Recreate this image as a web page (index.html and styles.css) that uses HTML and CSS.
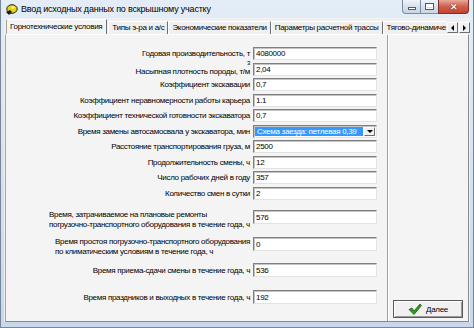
FILE: index.html
```html
<!DOCTYPE html>
<html lang="ru">
<head>
    <meta charset="UTF-8">
    <title>Ввод исходных данных по вскрышному участку</title>
    <link rel="stylesheet" href="styles.css">
</head>
<body>
    <div class="window">
        <!-- Заголовок окна -->
        <div class="titlebar">
            <svg class="app-icon" width="13" height="13" viewBox="0 0 13 13">
                <ellipse cx="7" cy="6" rx="5.2" ry="4.3" fill="#e3d21c" stroke="#2a2a00" stroke-width="1"/>
                <path d="M1 9 L5 7 L7 9 L4 12 Z" fill="#1a1a1a"/>
                <ellipse cx="8" cy="4.5" rx="2" ry="1.3" fill="#f8f070"/>
            </svg>
            <span class="title">Ввод исходных данных по вскрышному участку</span>
            <div class="caption-btns">
                <span class="cbtn cmin"><i></i></span>
                <span class="cbtn cmax"><i></i></span>
                <span class="cbtn cclose">&#x2715;</span>
            </div>
        </div>

        <div class="client">
            <!-- Вкладки -->
            <div class="tabs">
                <div class="tab-list">
                    <div class="tab active">Горнотехнические условия</div>
                    <div class="tab">Типы э-ра и а/с</div>
                    <div class="tab">Экономические показатели</div>
                    <div class="tab">Параметры расчетной трассы</div>
                    <div class="tab">Тягово-динамические показатели</div>
                </div>
                <div class="tab-scroll">
                    <span class="arrow left"></span>
                    <span class="arrow right"></span>
                </div>
            </div>

            <div class="page">
                <div class="form">
                    <div class="rows">
                        <div class="row"><label>Годовая производительность, т</label><input type="text" value="4080000"></div>
                        <div class="row"><label>Насыпная плотность породы, т/м<span class="sup">3</span></label><input type="text" value="2,04"></div>
                        <div class="row"><label>Коэффициент экскавации</label><input type="text" value="0,7"></div>
                        <div class="row"><label>Коэффициент неравномерности работы карьера</label><input type="text" value="1.1"></div>
                        <div class="row"><label>Коэффициент технической готовности экскаватора</label><input type="text" value="0,7"></div>
                        <div class="row">
                            <label>Время замены автосамосвала у экскаватора, мин</label>
                            <div class="combo">
                                <span class="sel">Схема заезда: петлевая 0,39</span>
                                <span class="drop"></span>
                            </div>
                        </div>
                        <div class="row"><label>Расстояние транспортирования груза, м</label><input type="text" value="2500"></div>
                        <div class="row"><label>Продолжительность смены, ч</label><input type="text" value="12"></div>
                        <div class="row"><label>Число рабочих дней в году</label><input type="text" value="357"></div>
                        <div class="row"><label>Количество смен в сутки</label><input type="text" value="2"></div>
                    </div>

                    <div class="row tall first">
                        <label class="multi">Время, затрачиваемое на плановые ремонты<br>погрузочно-транспортного оборудования в течение года, ч</label>
                        <input type="text" class="big" value="576">
                    </div>
                    <div class="row tall second">
                        <label class="multi">Время простоя погрузочно-транспортного оборудования<br>по климатическим условиям в течение года, ч</label>
                        <input type="text" class="big" value="0">
                    </div>
                    <div class="row third"><label>Время приема-сдачи смены в течение года, ч</label><input type="text" class="big" value="536"></div>
                    <div class="row fourth"><label>Время праздников и выходных в течение года, ч</label><input type="text" class="big" value="192"></div>
                </div>

                <div class="side">
                    <button class="next">
                        <svg width="14" height="12" viewBox="0 0 14 12">
                            <path d="M1 6.5 L4 5 L6 8 L12 1 L13.5 2.5 L6 11.5 Z" fill="#2f9e1f" stroke="#1b5e12" stroke-width="0.8"/>
                        </svg>
                        <span>Далее</span>
                    </button>
                </div>
            </div>
        </div>
    </div>
</body>
</html>
```

FILE: styles.css
```css
/* styles.css */
* {
    margin: 0;
    padding: 0;
    box-sizing: border-box;
}

body {
    width: 474px;
    height: 328px;
    overflow: hidden;
    font-family: "Liberation Sans", Arial, sans-serif;
    font-size: 8px;
    letter-spacing: -0.3px;
    color: #000;
    background: #c9d8ea;
}

.window {
    width: 474px;
    height: 328px;
    display: flex;
    flex-direction: column;
    background: linear-gradient(#e4edf7, #d3e0ef 60%, #c8d8ea);
    border: 1px solid #75869b;
    border-top: none;
    padding: 0 3px 5px 3px;
}

/* Заголовок */
.titlebar {
    height: 18px;
    display: flex;
    align-items: center;
    flex: none;
}

.app-icon {
    margin-left: 1px;
    margin-top: 1px;
}

.title {
    margin-left: 3px;
    font-size: 9px;
    letter-spacing: -0.2px;
    color: #000;
}

.caption-btns {
    margin-left: auto;
    align-self: flex-start;
    display: flex;
    margin-right: 1px;
}

.cbtn {
    height: 14px;
    display: flex;
    align-items: center;
    justify-content: center;
    border: 1px solid #7b8ba0;
    border-top: none;
}

.cmin,
.cmax {
    width: 18px;
    background: linear-gradient(#eef3f9, #d6e1ee 50%, #c7d5e6);
    border-right: none;
}

.cmin {
    border-bottom-left-radius: 4px;
}

.cmin i {
    width: 8px;
    height: 3px;
    margin-top: 3px;
    background: #fff;
    border: 1px solid #4f5c6c;
}

.cmax i {
    width: 9px;
    height: 7px;
    border: 1px solid #4f5c6c;
    box-shadow: inset 0 0 0 1px #fff, inset 0 2px 0 1px #fff;
}

.cclose {
    width: 31px;
    background: linear-gradient(#e9a99b, #cf5f4e 50%, #c4432f);
    border-color: #7d3027;
    border-bottom-right-radius: 4px;
    color: #fff;
    font-size: 9px;
    font-weight: bold;
    text-shadow: 0 0 1px #5a1b14, 0 0 1px #5a1b14;
}

/* Клиентская область */
.client {
    flex: 1;
    display: flex;
    flex-direction: column;
    background: #f0f0f0;
}

.tabs {
    height: 16px;
    display: flex;
    flex: none;
    padding-left: 2px;
}

.tab-list {
    flex: 1;
    min-width: 0;
    display: flex;
    overflow: hidden;
    align-items: flex-end;
}

.tab {
    height: 13px;
    line-height: 12px;
    padding: 0 3px 0 3px;
    white-space: nowrap;
    border-top: 1px solid #fff;
    border-left: 1px solid #fff;
    border-right: 1px solid #6f6f6f;
    background: #f0f0f0;
    flex: none;
}

.tab.active {
    height: 15px;
    line-height: 13px;
    padding: 0 4px 0 3px;
    margin-right: 1px;
    border-left-color: #a0a0a0;
    background: #f4f4f4;
}

.tab-scroll {
    flex: none;
    display: flex;
    align-items: flex-end;
    gap: 1px;
    padding: 0 0 1px 1px;
}

.arrow {
    width: 11px;
    height: 11px;
    background: #f0f0f0;
    border: 1px solid;
    border-color: #fff #6f6f6f #6f6f6f #fff;
    display: flex;
    align-items: center;
    justify-content: center;
}

.arrow::after {
    content: "";
    border-top: 3px solid transparent;
    border-bottom: 3px solid transparent;
}

.arrow.left::after {
    border-right: 3px solid #000;
}

.arrow.right::after {
    border-left: 3px solid #000;
}

/* Страница вкладки */
.page {
    flex: 1;
    display: flex;
    margin: 0 1px;
    background: #f4f4f4;
    border: 1px solid #8a8a8a;
    border-top-color: #fff;
    border-left-color: #a5a5a5;
}

.form {
    width: 381px;
    flex: none;
    display: flex;
    flex-direction: column;
    padding: 12px 10px 0 0;
}

.rows {
    display: flex;
    flex-direction: column;
    gap: 2.5px;
}

.row {
    display: flex;
    justify-content: flex-end;
    align-items: center;
    gap: 3px;
}

.row label {
    text-align: right;
    white-space: nowrap;
}

.sup {
    display: inline-block;
    width: 0;
    margin-left: -3px;
    margin-right: 3px;
    font-size: 6px;
    line-height: 0;
    vertical-align: 9px;
}

.row input,
.combo {
    width: 124px;
    height: 13px;
    flex: none;
    font-family: "Liberation Sans", Arial, sans-serif;
    font-size: 8px;
    letter-spacing: -0.3px;
    color: #000;
    background: #fff;
    border: 1px solid;
    border-color: #7f7f7f #e3e3e3 #e3e3e3 #7f7f7f;
    box-shadow: inset 1px 1px 0 #c4c4c4;
    padding: 0 1px 0 2px;
    outline: none;
}

.row input.big {
    height: 14px;
}

.row.tall {
    align-items: flex-start;
}

.row label.multi {
    text-align: left;
    line-height: 10px;
}

.row.first {
    margin-top: 10.5px;
}

.row.second {
    margin-top: 7px;
}

.row.third {
    margin-top: 6px;
}

.row.fourth {
    margin-top: 13px;
}

.combo {
    display: flex;
    align-items: stretch;
    padding: 1px;
}

.sel {
    flex: 1;
    min-width: 0;
    overflow: hidden;
    white-space: nowrap;
    background: #3399ff;
    color: #fff;
    line-height: 9px;
    padding-left: 2px;
    margin-right: 1px;
}

.drop {
    width: 11px;
    flex: none;
    background: #f0f0f0;
    border: 1px solid;
    border-color: #fff #6f6f6f #6f6f6f #fff;
    display: flex;
    align-items: center;
    justify-content: center;
}

.drop::after {
    content: "";
    border-left: 3px solid transparent;
    border-right: 3px solid transparent;
    border-top: 3px solid #000;
}

/* Правая панель */
.side {
    flex: 1;
    display: flex;
    flex-direction: column;
    justify-content: flex-end;
    padding: 0 0 3px 5px;
    border-left: 1px solid #a0a0a0;
    box-shadow: inset 1px 0 0 #fff;
}

.next {
    width: 70px;
    height: 18px;
    display: flex;
    align-items: center;
    justify-content: center;
    gap: 4px;
    font-family: "Liberation Sans", Arial, sans-serif;
    font-size: 8px;
    letter-spacing: -0.3px;
    color: #000;
    background: #f0f0f0;
    border: 1px solid #5a5a5a;
    box-shadow: inset 1px 1px 0 #fff, inset -1px -1px 0 #9a9a9a;
    cursor: pointer;
}
```
